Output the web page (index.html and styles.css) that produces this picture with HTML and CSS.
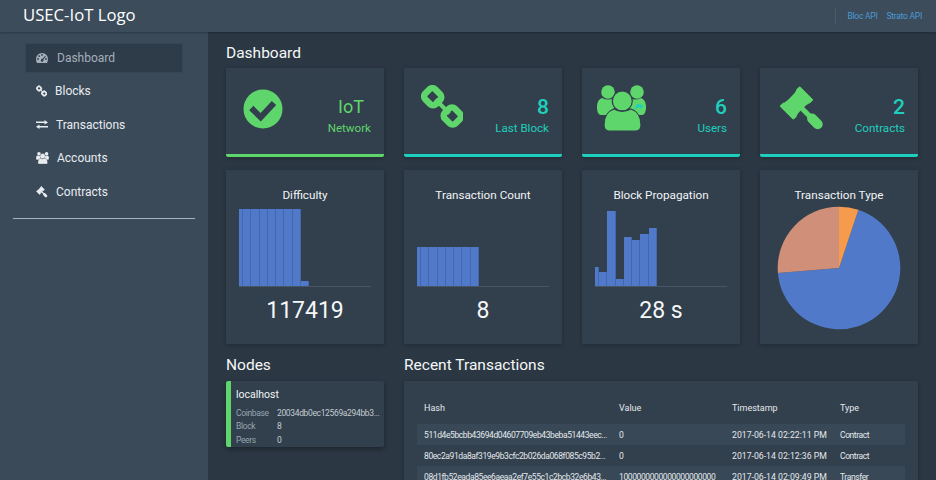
FILE: index.html
```html
<html>
<head>
 <meta charset="utf-8">
 <title>USEC-IoT</title>
 <link rel="stylesheet" href="styles.css">
</head>
<body>
 <svg class="defs" width="0" height="0">
  <symbol id="i-link" viewBox="0 0 42 43">
   <g fill="none" stroke="currentColor" stroke-width="6.500">
    <rect x="4.200" y="4.700" width="15" height="14" rx="4" transform="rotate(45 11.700 11.700)"/>
    <rect x="23.800" y="24" width="15" height="14" rx="4" transform="rotate(45 31.300 31)"/>
    <path d="M14.500 14.500l14 14" stroke-width="4"/>
   </g>
  </symbol>
  <symbol id="i-users" viewBox="0 0 49 46">
   <g fill="currentColor">
    <circle cx="11" cy="7" r="6.800"/>
    <circle cx="40" cy="7" r="6.800"/>
    <path d="M0 22c0-5 2-8 5-9 4 2 8 2 12 0l4 3-8 14H4c-3 0-4-4-4-8z"/>
    <path d="M49 22c0-5-2-8-5-9-4 2-8 2-12 0l-4 3 8 14h9c3 0 4-4 4-8z"/>
    <g class="gap">
     <circle cx="25.300" cy="16" r="10"/>
     <path d="M7 40c0-8 4-14 10-16 5 3 11 3 17 0 6 2 10 8 10 16 0 4-2 6-5 6H12c-3 0-5-2-5-6z"/>
    </g>
   </g>
  </symbol>
  <symbol id="i-gavel" viewBox="9 10 45 46">
   <g fill="currentColor" stroke="currentColor" stroke-linejoin="round" transform="translate(25.500 27) rotate(45)">
    <path stroke-width="2.500" d="M-8.500-13H8.500V-10Q7-8 7 0Q7 8 8.500 10V13H-8.500V10Q-7 8-7 0Q-7-8-8.500-10Z"/>
    <rect x="6" y="-2" width="14" height="4"/>
    <rect x="17" y="-5" width="18" height="10" rx="5" stroke="none"/>
   </g>
  </symbol>
 </svg>

 <header class="topbar">
  <div class="logo">USEC-IoT Logo</div>
  <nav class="apilinks">
   <a>Bloc API</a>
   <a>Strato API</a>
  </nav>
 </header>

 <div class="layout">
  <aside class="sidebar">
   <ul class="menu">
    <li class="active">
     <svg class="ic ic-dash" viewBox="0 0 12 10">
      <path fill="currentColor" fill-rule="evenodd" d="M6 0a6 6 0 0 1 6 6c0 1.500-.4 2.800-1 4H1C.4 8.800 0 7.500 0 6a6 6 0 0 1 6-6zM2 5a.9.9 0 1 0 0 1.800A.9.9 0 0 0 2 5zm1.200-2.800a.9.9 0 1 0 0 1.800.9.9 0 0 0 0-1.800zM6 1a.9.9 0 1 0 0 1.800A.9.9 0 0 0 6 1zm3.200 1.800L6.300 6.100a1.300 1.300 0 1 0 1 .7l2.500-3.500zM10 5a.9.9 0 1 0 0 1.800A.9.9 0 0 0 10 5z"/>
     </svg>
     <span>Dashboard</span>
    </li>
    <li><svg class="ic ic-blocks"><use href="#i-link"/></svg><span>Blocks</span></li>
    <li>
     <svg class="ic ic-trans" viewBox="0 0 12 9">
      <path fill="currentColor" d="M0 1.600h8.500V0L12 2.400 8.500 4.500V3H0zM12 5.900H3.500V4.500L0 6.700 3.500 9V7.400H12z"/>
     </svg>
     <span>Transactions</span>
    </li>
    <li class="item-acc"><svg class="ic ic-acc"><use href="#i-users"/></svg><span>Accounts</span></li>
    <li><svg class="ic ic-con"><use href="#i-gavel"/></svg><span>Contracts</span></li>
   </ul>
   <hr class="rule">
  </aside>

  <main class="main">
   <h2 class="title">Dashboard</h2>
   <div class="grid">
    <section class="card stat green">
     <svg class="stat-ic" width="40" height="40" viewBox="-20 -20 40 40">
      <circle r="19.500" fill="currentColor"/>
      <path d="M-11.700-1l9.400 9.300L11-6" fill="none" stroke="#323f4c" stroke-width="6"/>
     </svg>
     <div class="stat-txt"><b class="word">IoT</b><span>Network</span></div>
    </section>
    <section class="card stat teal">
     <svg class="stat-ic green-ic ic-l1" width="42" height="43"><use href="#i-link"/></svg>
     <div class="stat-txt"><b>8</b><span>Last Block</span></div>
    </section>
    <section class="card stat teal">
     <svg class="stat-ic green-ic ic-l2" width="49" height="46" viewBox="0 0 49 46">
      <use href="#i-users"/>
      <path d="M37 25l3-6 6 1-1 4-3-2z" fill="#1fcfbd"/>
     </svg>
     <div class="stat-txt"><b>6</b><span>Users</span></div>
    </section>
    <section class="card stat teal">
     <svg class="stat-ic green-ic ic-l3" width="45" height="46"><use href="#i-gavel"/></svg>
     <div class="stat-txt"><b>2</b><span>Contracts</span></div>
    </section>

    <section class="card chart">
     <h3>Difficulty</h3>
     <div class="bars">
      <i style="height:77px"></i><i style="height:77px"></i><i style="height:77px"></i><i style="height:77px"></i><i style="height:77px"></i><i style="height:77px"></i><i style="height:77px"></i><i style="height:77px"></i><i style="height:5px"></i>
     </div>
     <div class="big">117419</div>
    </section>
    <section class="card chart">
     <h3>Transaction Count</h3>
     <div class="bars">
      <i style="height:39px"></i><i style="height:39px"></i><i style="height:39px"></i><i style="height:39px"></i><i style="height:39px"></i><i style="height:39px"></i><i style="height:39px"></i><i style="height:39px"></i>
     </div>
     <div class="big">8</div>
    </section>
    <section class="card chart">
     <h3>Block Propagation</h3>
     <div class="bars">
      <i style="height:19px"></i><i style="height:14px"></i><i style="height:75px"></i><i style="height:7px"></i><i style="height:49px"></i><i style="height:46px"></i><i style="height:52px"></i><i style="height:58px"></i>
     </div>
     <div class="big">28 s</div>
    </section>
    <section class="card chart">
     <h3>Transaction Type</h3>
     <svg class="pie" width="124" height="124" viewBox="-62 -62 124 124">
      <path fill="#5079c9" d="M0 0L19.400-58.200A61.300 61.300 0 1 1-61.100 4.900Z"/>
      <path fill="#d08f78" d="M0 0L-61.100 4.900A61.300 61.300 0 0 1 0-61.300Z"/>
      <path fill="#f59b4b" d="M0 0L0-61.300A61.300 61.300 0 0 1 19.400-58.200Z"/>
     </svg>
    </section>

    <div class="col-nodes">
     <h2 class="title">Nodes</h2>
     <section class="card node">
      <h4>localhost</h4>
      <dl>
       <dt>Coinbase</dt><dd>20034db0ec12569a294bb3...</dd>
       <dt>Block</dt><dd>8</dd>
       <dt>Peers</dt><dd>0</dd>
      </dl>
     </section>
    </div>
    <div class="col-txs">
     <h2 class="title">Recent Transactions</h2>
     <section class="card txs">
      <table>
       <thead>
        <tr><th class="c-hash">Hash</th><th class="c-val">Value</th><th class="c-time">Timestamp</th><th>Type</th></tr>
       </thead>
       <tbody>
        <tr><td>511d4e5bcbb43694d04607709eb43beba51443eec...</td><td>0</td><td class="when">2017-06-14 02:22:11 PM</td><td>Contract</td></tr>
        <tr><td>80ec2a91da8af319e9b3cfc2b026da068f085c95b2...</td><td>0</td><td class="when">2017-06-14 02:12:36 PM</td><td>Contract</td></tr>
        <tr><td>08d1fb52eada85ee6aeaa2ef7e55c1c2bcb32e6b43...</td><td>1000000000000000000000</td><td class="when">2017-06-14 02:09:49 PM</td><td>Transfer</td></tr>
       </tbody>
      </table>
     </section>
    </div>
   </div>
  </main>
 </div>
</body>
</html>
```

FILE: styles.css
```css
html, body {
 margin: 0;
 height: 100%;
 overflow: hidden;
}
body {
 background: #2b3743;
 color: #f1f4f6;
 font-family: Roboto, "Liberation Sans", sans-serif;
 --gap: #323f4c;
}
.defs {
 position: absolute;
}
.gap {
 stroke: var(--gap);
 stroke-width: 1.2;
}

.topbar {
 height: 32px;
 box-sizing: border-box;
 display: flex;
 align-items: center;
 justify-content: space-between;
 padding: 0 14px 0 23px;
 background: #3c4c5b;
 box-shadow: 0 1px 2px rgba(0, 0, 0, .25);
 position: relative;
}
.logo {
 font-family: "Open Sans", sans-serif;
 font-size: 16.700px;
 color: #fff;
 margin-top: -3px;
}
.apilinks {
 display: flex;
 gap: 9px;
 font-size: 8.500px;
 letter-spacing: -.25px;
 color: #4b9ad6;
 border-left: 1px solid #4a5a69;
 padding: 3px 0 3px 11px;
}

.layout {
 display: flex;
 height: 448px;
}
.sidebar {
 width: 208px;
 flex: none;
 box-sizing: border-box;
 background: #3a4a59;
 padding: 12px 13px 0;
}
.menu {
 list-style: none;
 margin: 0;
 padding: 0 13px;
}
.menu li {
 display: flex;
 align-items: center;
 height: 28px;
 margin-bottom: 5.400px;
 padding-left: 10px;
 font-size: 12px;
 color: #e8ecef;
}
.menu li.active {
 background: #2e3b48;
 color: #a4b0ba;
 box-shadow: 0 0 1px rgba(0, 0, 0, .4);
}
.ic {
 flex: none;
 margin-right: 8px;
}
.ic-dash {
 width: 12px;
 height: 10px;
 margin-right: 9px;
}
.ic-blocks {
 width: 11px;
 height: 12px;
}
.ic-trans {
 width: 12px;
 height: 9px;
}
.ic-acc {
 width: 13px;
 height: 12px;
 --gap: #3a4a59;
}
.ic-con {
 width: 12px;
 height: 12px;
}
.rule {
 border: 0;
 border-top: 1px solid #a9b3bb;
 margin: 12px 0 0;
}

.main {
 flex: 1;
 min-width: 0;
 padding: 0 18px;
}
.title {
 margin: 12px 0 6px;
 font-size: 15.500px;
 line-height: 18px;
 font-weight: 400;
 color: #f5f7f8;
}
.grid {
 display: grid;
 grid-template-columns: repeat(4, 158px);
 column-gap: 20px;
 row-gap: 13px;
}
.card {
 background: #323f4c;
 box-shadow: 0 1px 4px rgba(0, 0, 0, .25);
 border-radius: 1px;
}

.stat {
 height: 89px;
 box-sizing: border-box;
 border-bottom: 3px solid;
 border-radius: 0 0 2px 2px;
 display: flex;
 justify-content: space-between;
 padding: 0 13px 0 17px;
}
.stat.green {
 color: #5fd66b;
}
.stat.teal {
 color: #1fcfbd;
}
.stat-ic {
 margin-top: 21px;
}
.green-ic {
 color: #5fd66b;
}
.ic-l1 {
 margin-top: 17px;
}
.ic-l2 {
 margin: 17px 0 0 -2px;
}
.ic-l3 {
 margin: 18px 0 0 3px;
}
.stat-txt {
 display: flex;
 flex-direction: column;
 align-items: flex-end;
 padding-top: 27px;
}
.stat-txt b {
 font-weight: 500;
 font-size: 21px;
 line-height: 24px;
}
.stat-txt b.word {
 font-weight: 400;
 font-size: 18px;
 margin-right: 7px;
}
.stat-txt span {
 font-size: 11.600px;
 line-height: 16px;
 margin-top: 1px;
}

.chart {
 height: 174px;
 text-align: center;
 padding-top: 18px;
 box-sizing: border-box;
}
.chart h3 {
 margin: 0;
 font-size: 11.700px;
 line-height: 15px;
 font-weight: 400;
 color: #f1f4f6;
}
.bars {
 height: 77px;
 margin: 6px 13px 0 12.500px;
 display: flex;
 align-items: flex-end;
 border-bottom: 1px solid #475564;
}
.bars i {
 width: 8.250px;
 box-sizing: border-box;
 background: #5079c9;
 border-right: 1px solid #4568ac;
}
.bars i:first-child {
 width: 4.500px;
}
.big {
 font-size: 23px;
 line-height: 28px;
 margin-top: 10px;
 color: #f5f7f8;
}
.pie {
 display: block;
 margin: 3px 0 0 17px;
}

.col-nodes .title, .col-txs .title {
 margin-top: 0;
 margin-bottom: 8px;
 line-height: 16px;
}
.col-txs {
 grid-column: span 3;
}
.node {
 height: 66px;
 box-sizing: border-box;
 border-left: 5px solid #5fd66b;
 padding: 7px 5px 0 5px;
 border-radius: 2px;
 box-shadow: 0 2px 5px rgba(0, 0, 0, .35);
}
.node h4 {
 margin: 0 0 6px;
 font-size: 10.500px;
 line-height: 13px;
 font-weight: 400;
}
.node dl {
 margin: 0;
 display: grid;
 grid-template-columns: 41px 1fr;
 font-size: 8.500px;
 letter-spacing: -.35px;
 line-height: 13.400px;
}
.node dt {
 color: #98a5b0;
}
.node dd {
 margin: 0;
 color: #c3ccd3;
 white-space: nowrap;
}

.txs {
 height: 120px;
 padding: 21px 13px 0;
 box-sizing: border-box;
}
.txs table {
 width: 100%;
 table-layout: fixed;
 border-collapse: collapse;
}
.txs th {
 text-align: left;
 font-weight: 400;
 font-size: 9px;
 line-height: 12px;
 padding: 0 7px 10px;
 color: #e4e8ec;
}
.c-hash {
 width: 181px;
}
.c-val {
 width: 99px;
}
.c-time {
 width: 94px;
}
.txs td {
 height: 21px;
 padding: 0 7px;
 font-size: 8.500px;
 letter-spacing: -.4px;
 color: #e4e8ec;
 white-space: nowrap;
}
.txs td.when {
 font-size: 8.700px;
 letter-spacing: 0;
}
.txs tbody tr:nth-child(odd) {
 background: #384857;
}
```
